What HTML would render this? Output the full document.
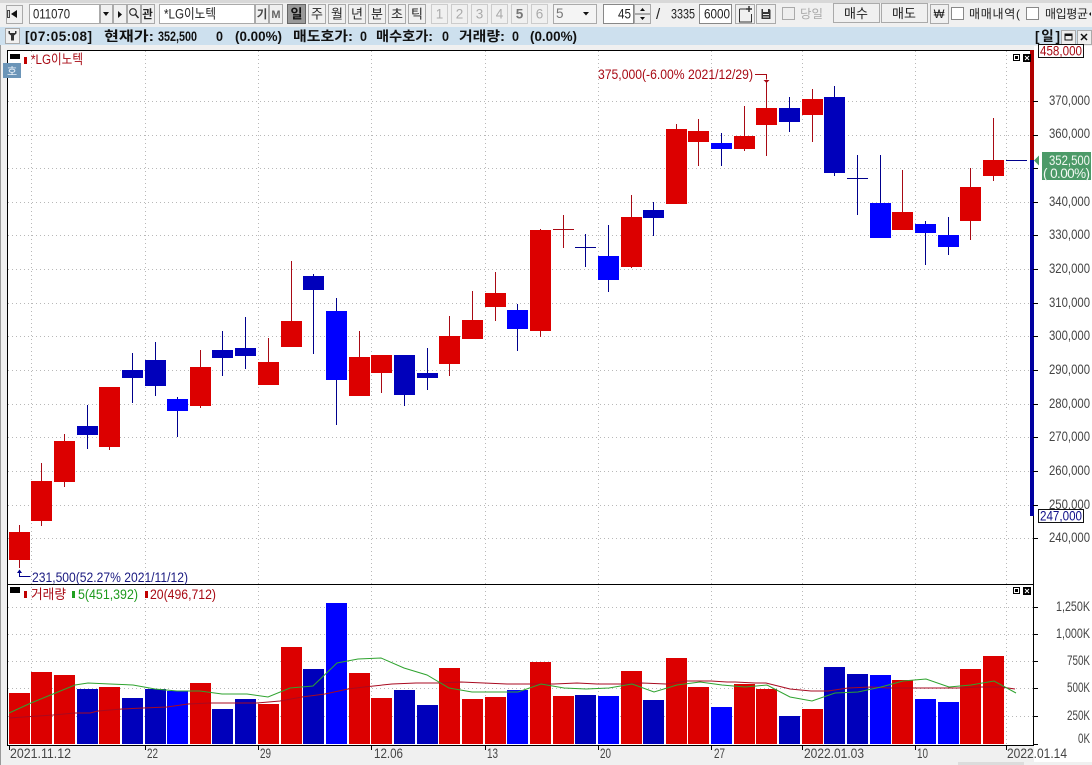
<!DOCTYPE html>
<html><head><meta charset="utf-8"><style>
html,body{margin:0;padding:0;background:#f0f0f0;width:1092px;height:765px;overflow:hidden}
svg{display:block}
text{font-family:"Liberation Sans","Noto Sans CJK KR",sans-serif;font-size:13.5px;fill:#222}
.ax{fill:#444;font-size:14px}
.b{font-weight:bold;font-size:13.5px;fill:#111}
.t{font-size:13px;fill:#222;text-anchor:middle}
.g{fill:#aaa;font-size:13.5px;text-anchor:middle}
.btn{fill:#f0f0f0;stroke:#aaa}
.dim{fill:#f0f0f0;stroke:#ccc}
</style></head><body>
<svg width="1092" height="765" viewBox="0 0 1092 765" xmlns="http://www.w3.org/2000/svg">
<rect width="1092" height="765" fill="#f0f0f0"/>
<rect width="1092" height="3" fill="#d8d8d8"/>
<rect x="0" y="27" width="1092" height="18" fill="#cde0ee"/>
<rect x="0" y="45" width="1" height="720" fill="#999"/>

<!-- toolbar -->
<g shape-rendering="crispEdges">
<rect x="6.5" y="5.5" width="16" height="18" class="btn"/>
<rect x="29.5" y="4.5" width="70" height="19" fill="#fff" stroke="#aaa"/>
<rect x="100.5" y="4.5" width="12" height="19" class="btn"/>
<rect x="113.5" y="4.5" width="13" height="19" class="btn"/>
<rect x="127.5" y="4.5" width="13" height="19" class="btn"/>
<rect x="141.5" y="4.5" width="13" height="19" class="btn"/>
<rect x="159.5" y="4.5" width="95" height="19" fill="#fff" stroke="#aaa"/>
<rect x="255.5" y="4.5" width="13" height="19" class="btn"/>
<rect x="269.5" y="4.5" width="13" height="19" class="btn"/>
<rect x="287.5" y="4.5" width="18" height="19" fill="#9a9a9a" stroke="#666"/>
<rect x="308.5" y="4.5" width="17" height="19" class="btn"/>
<rect x="328.5" y="4.5" width="17" height="19" class="btn"/>
<rect x="348.5" y="4.5" width="17" height="19" class="btn"/>
<rect x="368.5" y="4.5" width="17" height="19" class="btn"/>
<rect x="388.5" y="4.5" width="17" height="19" class="btn"/>
<rect x="408.5" y="4.5" width="17" height="19" class="btn"/>
<rect x="431.5" y="4.5" width="16" height="19" class="dim"/>
<rect x="451.5" y="4.5" width="16" height="19" class="dim"/>
<rect x="471.5" y="4.5" width="16" height="19" class="dim"/>
<rect x="491.5" y="4.5" width="16" height="19" class="dim"/>
<rect x="511.5" y="4.5" width="16" height="19" class="dim"/>
<rect x="531.5" y="4.5" width="16" height="19" class="dim"/>
<rect x="553.5" y="4.5" width="43" height="19" fill="#f4f4f4" stroke="#aaa"/>
<rect x="603.5" y="4.5" width="30" height="19" fill="#fff" stroke="#888"/>
<rect x="634.5" y="4.5" width="16" height="9" fill="#eee" stroke="#aaa"/>
<rect x="634.5" y="14.5" width="16" height="9" fill="#eee" stroke="#aaa"/>
<rect x="699.5" y="4.5" width="32" height="19" fill="#fff" stroke="#888"/>
<rect x="735.5" y="4.5" width="19" height="19" class="btn"/>
<rect x="756.5" y="4.5" width="19" height="19" class="btn"/>
<rect x="782.5" y="7.5" width="12" height="12" fill="#eee" stroke="#aaa"/>
<rect x="833.5" y="3.5" width="46" height="19" class="btn"/>
<rect x="881.5" y="3.5" width="46" height="19" class="btn"/>
<rect x="930.5" y="4.5" width="18" height="19" class="btn"/>
<rect x="951.5" y="7.5" width="12" height="12" fill="#fff" stroke="#888"/>
<rect x="1026.5" y="7.5" width="12" height="12" fill="#fff" stroke="#888"/>
<rect x="7" y="10" width="3" height="8" fill="#444"/>
<rect x="8" y="11" width="1" height="6" fill="#ddd"/>
<rect x="958" y="762" width="66" height="3" fill="#dcdcdc"/>
</g>
<path d="M17 10v8l-6-4z M103 12h6l-3 4z M118 11l4 3.500-4 3.500z M583 12h6l-3 3.500z M640 11l2.500-3 2.500 3z M640 17l2.500 3 2.500-3z M1091 12l-2 2 2 2z" fill="#111"/>
<circle cx="133" cy="12" r="3.300" fill="none" stroke="#222" stroke-width="1.100"/><path d="M135.500 14.500l3 3.500" stroke="#222" stroke-width="1.400"/>
<path d="M739.500 9v13h12v-8M739.500 9h7" fill="none" stroke="#333"/><path d="M749 6v6M746 9h6" stroke="#333" stroke-width="1.500"/>
<path d="M761.500 9h8l1 1v9h-9z" fill="#333"/><rect x="763" y="9" width="5" height="3" fill="#eee"/><rect x="763" y="14" width="6" height="1" fill="#eee"/><rect x="763" y="16.500" width="6" height="1" fill="#eee"/>

<text x="33" y="18.500" textLength="37" lengthAdjust="spacingAndGlyphs">011070</text>
<text x="147.500" y="18" class="t" style="font-weight:bold;font-size:11.500px">관</text>
<text x="164" y="18.500" textLength="52" lengthAdjust="spacingAndGlyphs">*LG이노텍</text>
<text x="262" y="18" class="t" style="font-weight:bold;font-size:11.500px;fill:#444">기</text>
<text x="276" y="18" class="t" style="font-weight:bold;font-size:11px;fill:#666">M</text>
<text x="296.500" y="18.500" class="t" style="font-weight:bold;fill:#111">일</text>
<text x="317" y="18.500" class="t">주</text><text x="337" y="18.500" class="t">월</text><text x="357" y="18.500" class="t">년</text><text x="377" y="18.500" class="t">분</text><text x="397" y="18.500" class="t">초</text><text x="417" y="18.500" class="t">틱</text>
<text x="439.500" y="18.500" class="g">1</text><text x="459.500" y="18.500" class="g">2</text><text x="479.500" y="18.500" class="g">3</text><text x="499.500" y="18.500" class="g">4</text>
<text x="519.500" y="18.500" class="g" style="font-weight:bold;fill:#777">5</text><text x="539.500" y="18.500" class="g">6</text>
<text x="556" y="18" style="fill:#777">5</text>
<text x="618" y="18.500" textLength="13" lengthAdjust="spacingAndGlyphs">45</text>
<text x="656" y="19" style="font-size:15px">/</text>
<text x="671" y="18.500" textLength="24" lengthAdjust="spacingAndGlyphs">3335</text>
<text x="704" y="18.500" textLength="26" lengthAdjust="spacingAndGlyphs">6000</text>
<text x="800" y="18" textLength="23" lengthAdjust="spacingAndGlyphs" style="fill:#aaa;font-size:12px">당일</text>
<text x="856" y="18" class="t" textLength="24" lengthAdjust="spacing">매수</text>
<text x="904" y="18" class="t" textLength="24" lengthAdjust="spacing">매도</text>
<text x="939" y="18" class="t" style="font-size:11.500px">₩</text>
<text x="969" y="18" textLength="51" lengthAdjust="spacing" style="font-size:12px">매매내역(</text>
<text x="1045" y="18" textLength="43" lengthAdjust="spacing" style="font-size:12px">매입평균</text>

<!-- status bar -->
<rect x="5.500" y="28.500" width="14" height="15" fill="#f0f0f0" stroke="#aaa" shape-rendering="crispEdges"/>
<path d="M8.500 31v2.500l2.500 2v5h3v-5l2.500-2V31l-1.500 0v2h-5v-2z" fill="#333"/>
<text class="b" x="25" y="41" textLength="67" lengthAdjust="spacing">[07:05:08]</text>
<text class="b" x="104" y="41" textLength="50" lengthAdjust="spacingAndGlyphs">현재가:</text>
<text class="b" x="158" y="41" textLength="39" lengthAdjust="spacingAndGlyphs">352,500</text>
<text class="b" x="216" y="41" textLength="7" lengthAdjust="spacingAndGlyphs">0</text>
<text class="b" x="235" y="41" textLength="47" lengthAdjust="spacingAndGlyphs">(0.00%)</text>
<text class="b" x="293" y="41" textLength="60" lengthAdjust="spacingAndGlyphs">매도호가:</text>
<text class="b" x="360" y="41" textLength="7" lengthAdjust="spacingAndGlyphs">0</text>
<text class="b" x="376" y="41" textLength="57" lengthAdjust="spacingAndGlyphs">매수호가:</text>
<text class="b" x="442" y="41" textLength="7" lengthAdjust="spacingAndGlyphs">0</text>
<text class="b" x="459" y="41" textLength="46" lengthAdjust="spacingAndGlyphs">거래량:</text>
<text class="b" x="512" y="41" textLength="7" lengthAdjust="spacingAndGlyphs">0</text>
<text class="b" x="530" y="41" textLength="47" lengthAdjust="spacingAndGlyphs">(0.00%)</text>
<text class="b" x="1035" y="41" textLength="25" lengthAdjust="spacing">[일]</text>
<g shape-rendering="crispEdges"><rect x="1061.500" y="30.500" width="14" height="14" fill="#eee" stroke="#aaa"/><rect x="1077.500" y="30.500" width="14" height="14" fill="#eee" stroke="#aaa"/><rect x="1065" y="34" width="7" height="6" fill="none" stroke="#111"/><rect x="1065" y="34" width="7" height="2" fill="#111"/></g>
<path d="M1081 34l6 6M1087 34l-6 6" stroke="#111" stroke-width="1.500"/>

<!-- chart area -->
<rect x="8" y="51" width="1025" height="694" fill="#fff"/>
<rect x="1034" y="46" width="58" height="716" fill="#fff"/>

<!-- grid -->
<g stroke="#b8b8b8" stroke-dasharray="1 3" fill="none" shape-rendering="crispEdges">
<path d="M8 101.500H1033M8 135.500H1033M8 168.500H1033M8 202.500H1033M8 235.500H1033M8 269.500H1033M8 303.500H1033M8 336.500H1033M8 370.500H1033M8 404.500H1033M8 437.500H1033M8 471.500H1033M8 505.500H1033M8 538.500H1033"/>
<path d="M8 607.500H1033M8 634.500H1033M8 661.500H1033M8 688.500H1033M8 716.500H1033"/>
<path d="M31.500 51V745M145.500 51V745M258.500 51V745M371.500 51V745M485.500 51V745M598.500 51V745M711.500 51V745M802.500 51V745M915.500 51V745M1006.500 51V745"/>
</g>

<!-- wicks -->
<path shape-rendering="crispEdges" fill="none" stroke="#a80a14" d="M19.500 525V568M41.500 463V526M64.500 434V487M109.500 387V450M200.500 350V408M268.500 338V385M291.500 261V347M359.500 331V396M381.500 355V393M449.500 316V376M472.500 291V339M495.500 272V321M540.500 229V337M563.500 215V248M553 229.500H574M631.500 195V268M676.500 124V204M698.500 119V166M744.500 106V151M766.500 82V156M812.500 89V142M902.500 170V230M970.500 168V240M993.500 118V181"/>
<path shape-rendering="crispEdges" fill="none" stroke="#00008c" d="M87.500 405V449M132.500 353V403M155.500 342V396M177.500 397V437M222.500 331V376M245.500 317V369M313.500 274V354M336.500 298V425M404.500 355V406M427.500 348V390M517.500 304V351M585.500 234V267M575 247.500H596M608.500 225V292M653.500 202V236M721.500 133V166M789.500 97V132M834.500 86V176M857.500 155V215M847 178.500H868M880.500 155V238M925.500 221V265M948.500 217V255M1006 160.500H1027"/>

<!-- bodies -->
<path shape-rendering="crispEdges" fill="#dc0000" d="M9 532h21v28h-21zM31 481h21v40h-21zM54 441h21v41h-21zM99 387h21v60h-21zM190 367h21v39h-21zM258 362h21v23h-21zM281 321h21v26h-21zM349 357h21v39h-21zM371 355h21v18h-21zM439 336h21v28h-21zM462 320h21v19h-21zM485 293h21v14h-21zM530 230h21v101h-21zM621 217h21v50h-21zM666 129h21v75h-21zM688 131h21v11h-21zM734 136h21v13h-21zM756 108h21v17h-21zM802 99h21v16h-21zM892 212h21v18h-21zM960 187h21v34h-21zM983 160h21v16h-21z"/>
<path shape-rendering="crispEdges" fill="#0000bb" d="M77 426h21v9h-21zM122 370h21v8h-21zM145 360h21v26h-21zM212 350h21v8h-21zM235 348h21v8h-21zM303 276h21v14h-21zM394 355h21v40h-21zM417 373h21v5h-21zM643 210h21v8h-21zM779 108h21v14h-21zM824 97h21v76h-21z"/>
<path shape-rendering="crispEdges" fill="#0000ff" d="M167 399h21v12h-21zM326 311h21v69h-21zM507 310h21v19h-21zM598 256h21v24h-21zM711 143h21v6h-21zM870 203h21v35h-21zM915 224h21v9h-21zM938 235h21v12h-21z"/>

<!-- volume -->
<path shape-rendering="crispEdges" fill="#dc0000" d="M9 693H30V744H9zM31 672H52V744H31zM54 675H75V744H54zM99 687H120V744H99zM190 683H211V744H190zM258 704H279V744H258zM281 647H302V744H281zM349 673H370V744H349zM371 698H392V744H371zM439 668H460V744H439zM462 699H483V744H462zM485 697H506V744H485zM530 662H551V744H530zM553 696H574V744H553zM621 671H642V744H621zM666 658H687V744H666zM688 687H709V744H688zM734 684H755V744H734zM756 689H777V744H756zM802 709H823V744H802zM892 680H913V744H892zM960 669H981V744H960zM983 656H1004V744H983z"/>
<path shape-rendering="crispEdges" fill="#0000bb" d="M77 689H98V744H77zM122 698H143V744H122zM145 689H166V744H145zM212 709H233V744H212zM235 699H256V744H235zM303 669H324V744H303zM394 690H415V744H394zM417 705H438V744H417zM575 695H596V744H575zM643 700H664V744H643zM779 716H800V744H779zM824 667H845V744H824zM847 674H868V744H847z"/>
<path shape-rendering="crispEdges" fill="#0000ff" d="M167 691H188V744H167zM326 603H347V744H326zM507 690H528V744H507zM598 696H619V744H598zM711 707H732V744H711zM870 675H891V744H870zM915 699H936V744H915zM938 702H959V744H938z"/>

<!-- moving averages -->
<polyline fill="none" stroke="#a80a20" stroke-width="1" points="9,718 53,715 75,713 90,713 98,711 122,709 143,708 167,707 188,704 210,703 233,703 257,703 280,701 302,697 325,694 348,689 364,687 392,684 416,683 439,683 461,682 484,683 507,684 531,684 554,684 577,683 597,684 621,684 642,683 666,684 687,681 711,681 727,682 735,682 755,683 766,683 778,686 790,689 811,691 828,691 848,688 871,687 891,688 915,688 958,688 981,687 1001,687 1015,689"/>
<polyline fill="none" stroke="#2fa32f" stroke-width="1" points="9,713 31,703 53,694 75,685 88,683 110,684 133,685 155,689 177,691 200,691 222,694 247,694 268,697 290,688 313,686 337,663 358,659 381,658 404,668 427,675 449,688 472,692 495,692 518,692 541,684 564,688 586,689 609,688 632,684 654,692 677,685 700,682 722,685 745,687 767,685 790,697 812,701 835,693 858,692 881,687 903,681 926,679 949,687 971,685 994,681 1016,693"/>

<!-- frame -->
<g shape-rendering="crispEdges">
<rect x="7" y="50" width="1027" height="1" fill="#000"/>
<rect x="7" y="50" width="1" height="696" fill="#000"/>
<rect x="7" y="584" width="1027" height="1" fill="#000"/>
<rect x="7" y="745" width="1027" height="1" fill="#000"/>
<rect x="1033" y="50" width="1" height="696" fill="#000"/>
<rect x="1030" y="50" width="4" height="110" fill="#b00000"/>
<rect x="1030" y="160" width="4" height="356" fill="#0000a0"/>
<path fill="none" stroke="#000" d="M1033 101.500h5M1033 135.500h5M1033 168.500h5M1033 202.500h5M1033 235.500h5M1033 269.500h5M1033 303.500h5M1033 336.500h5M1033 370.500h5M1033 404.500h5M1033 437.500h5M1033 471.500h5M1033 505.500h5M1033 538.500h5M1033 607.500h5M1033 634.500h5M1033 661.500h5M1033 688.500h5M1033 716.500h5M1033 744.500h5M9.500 746v4M145.500 746v4M258.500 746v4M371.500 746v4M485.500 746v4M598.500 746v4M711.500 746v4M802.500 746v4M915.500 746v4M1006.500 746v4"/>
<rect x="10" y="54" width="10" height="5" fill="#000"/>
<rect x="10" y="587" width="10" height="6" fill="#000"/>
<rect x="24" y="57" width="3" height="7" fill="#c00000"/>
<rect x="24" y="591" width="3" height="7" fill="#c00000"/>
<rect x="72" y="591" width="3" height="7" fill="#20a020"/>
<rect x="145" y="591" width="3" height="7" fill="#c00000"/>
<rect x="3" y="63" width="18" height="15" fill="#6b95b8"/>
<rect x="1013.500" y="54.500" width="6" height="6" fill="#fff" stroke="#000"/><rect x="1015" y="56" width="3" height="3" fill="#000"/>
<rect x="1023" y="54" width="8" height="8" fill="#000"/>
<rect x="1013.500" y="587.500" width="6" height="6" fill="#fff" stroke="#000"/><rect x="1015" y="589" width="3" height="3" fill="#000"/>
<rect x="1023" y="587" width="8" height="8" fill="#000"/>
</g>
<path d="M1025 56l4 4M1029 56l-4 4M1025 589l4 4M1029 589l-4 4" stroke="#fff" stroke-width="1"/>
<text x="12" y="75" class="t" style="fill:#e8f0f8;font-size:11px">호</text>

<!-- legends -->
<text x="31" y="64" textLength="52" lengthAdjust="spacingAndGlyphs" style="fill:#a80a14">*LG이노텍</text>
<text x="31" y="599" textLength="35" lengthAdjust="spacingAndGlyphs" style="fill:#a80a14">거래량</text>
<text x="78" y="599" textLength="60" lengthAdjust="spacingAndGlyphs" style="fill:#1d9a1d">5(451,392)</text>
<text x="150" y="599" textLength="66" lengthAdjust="spacingAndGlyphs" style="fill:#a80a14">20(496,712)</text>

<!-- annotations -->
<text x="598" y="79" textLength="155" lengthAdjust="spacingAndGlyphs" style="fill:#a80a14">375,000(-6.00% 2021/12/29)</text>
<path d="M755 74.500h11.500v5" fill="none" stroke="#a80a14"/><path d="M763.500 80h6l-3 3z" fill="#a80a14"/>
<text x="32" y="582" textLength="156" lengthAdjust="spacingAndGlyphs" style="fill:#1a1a80">231,500(52.27% 2021/11/12)</text>
<path d="M19.500 572v4.500h11" fill="none" stroke="#00008c"/><path d="M17 573h5l-2.500-3.500z" fill="#00008c"/>

<!-- price labels -->
<text class="ax" x="1049" y="105" textLength="41" lengthAdjust="spacingAndGlyphs">370,000</text>
<text class="ax" x="1049" y="138" textLength="41" lengthAdjust="spacingAndGlyphs">360,000</text>
<text class="ax" x="1049" y="206" textLength="41" lengthAdjust="spacingAndGlyphs">340,000</text>
<text class="ax" x="1049" y="239" textLength="41" lengthAdjust="spacingAndGlyphs">330,000</text>
<text class="ax" x="1049" y="273" textLength="41" lengthAdjust="spacingAndGlyphs">320,000</text>
<text class="ax" x="1049" y="307" textLength="41" lengthAdjust="spacingAndGlyphs">310,000</text>
<text class="ax" x="1049" y="340" textLength="41" lengthAdjust="spacingAndGlyphs">300,000</text>
<text class="ax" x="1049" y="374" textLength="41" lengthAdjust="spacingAndGlyphs">290,000</text>
<text class="ax" x="1049" y="408" textLength="41" lengthAdjust="spacingAndGlyphs">280,000</text>
<text class="ax" x="1049" y="441" textLength="41" lengthAdjust="spacingAndGlyphs">270,000</text>
<text class="ax" x="1049" y="475" textLength="41" lengthAdjust="spacingAndGlyphs">260,000</text>
<text class="ax" x="1049" y="509" textLength="41" lengthAdjust="spacingAndGlyphs">250,000</text>
<text class="ax" x="1049" y="542" textLength="41" lengthAdjust="spacingAndGlyphs">240,000</text>
<text class="ax" x="1056" y="611" textLength="34" lengthAdjust="spacingAndGlyphs">1,250K</text>
<text class="ax" x="1056" y="638" textLength="34" lengthAdjust="spacingAndGlyphs">1,000K</text>
<text class="ax" x="1067" y="665" textLength="23" lengthAdjust="spacingAndGlyphs">750K</text>
<text class="ax" x="1067" y="692" textLength="23" lengthAdjust="spacingAndGlyphs">500K</text>
<text class="ax" x="1067" y="720" textLength="23" lengthAdjust="spacingAndGlyphs">250K</text>
<text class="ax" x="1078" y="743" textLength="12" lengthAdjust="spacingAndGlyphs">0K</text>

<rect x="1038.500" y="44.500" width="45" height="13" fill="#fff" stroke="#111" shape-rendering="crispEdges"/>
<text x="1040" y="55.500" textLength="42" lengthAdjust="spacingAndGlyphs" style="fill:#a80a14">458,000</text>
<rect x="1038.500" y="509.500" width="45" height="13" fill="#fff" stroke="#111" shape-rendering="crispEdges"/>
<text x="1040" y="520.500" textLength="42" lengthAdjust="spacingAndGlyphs" style="fill:#10108a">247,000</text>
<rect x="1042" y="152" width="49" height="28" fill="#4c9a68"/>
<path d="M1034 160.500l5-5v10z" fill="#4c9a68"/>
<text x="1049" y="165" textLength="41" lengthAdjust="spacingAndGlyphs" style="fill:#f2f8f2">352,500</text>
<text x="1043" y="178" textLength="47" lengthAdjust="spacing" style="fill:#f2f8f2">( 0.00%)</text>

<!-- dates -->
<text class="ax" x="10" y="758" textLength="61" lengthAdjust="spacingAndGlyphs">2021.11.12</text>
<text class="ax" x="147" y="758" textLength="11" lengthAdjust="spacingAndGlyphs">22</text>
<text class="ax" x="260" y="758" textLength="11" lengthAdjust="spacingAndGlyphs">29</text>
<text class="ax" x="374" y="758" textLength="29" lengthAdjust="spacingAndGlyphs">12.06</text>
<text class="ax" x="487" y="758" textLength="11" lengthAdjust="spacingAndGlyphs">13</text>
<text class="ax" x="600" y="758" textLength="11" lengthAdjust="spacingAndGlyphs">20</text>
<text class="ax" x="714" y="758" textLength="11" lengthAdjust="spacingAndGlyphs">27</text>
<text class="ax" x="804" y="758" textLength="60" lengthAdjust="spacingAndGlyphs">2022.01.03</text>
<text class="ax" x="917" y="758" textLength="11" lengthAdjust="spacingAndGlyphs">10</text>
<text class="ax" x="1007" y="758" textLength="60" lengthAdjust="spacingAndGlyphs">2022.01.14</text>
</svg>
</body></html>
